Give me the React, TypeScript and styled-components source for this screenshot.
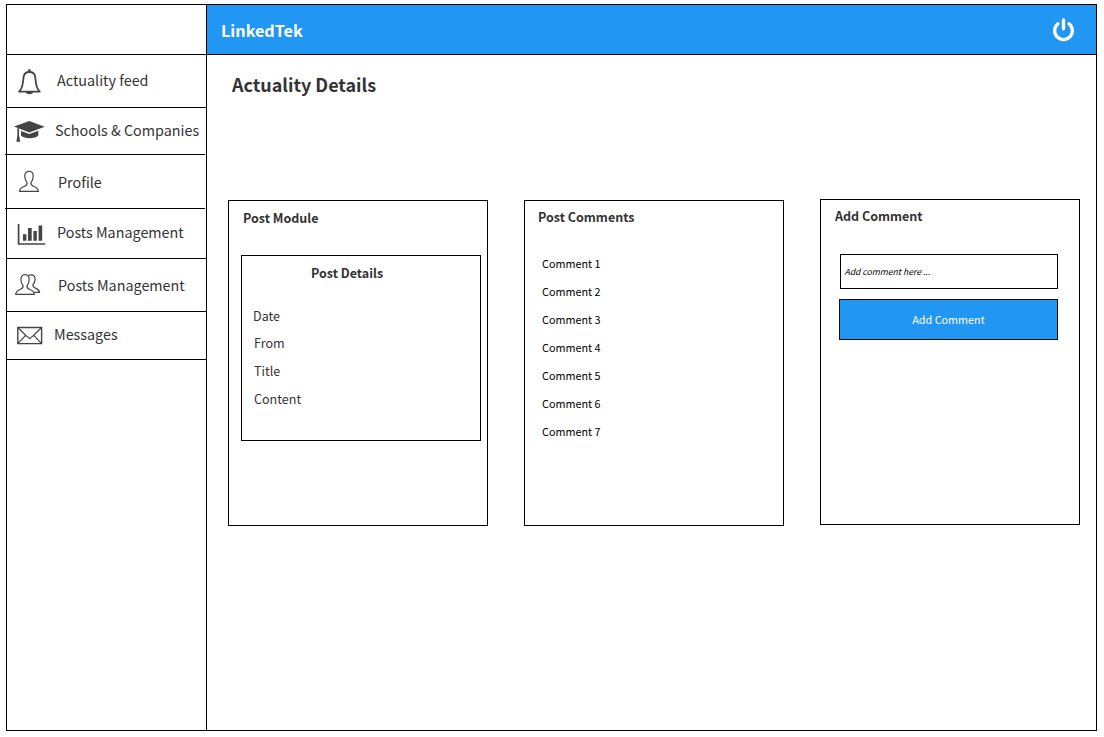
import React from "react";
import styled, { createGlobalStyle } from "styled-components";

const Global = createGlobalStyle`
  * { box-sizing: border-box; }
  body { margin: 0; background: #fff; color: #333; font-family: "Noto Sans CJK SC", "Noto Sans", sans-serif; }
  h1, h2, h3, p, ul { margin: 0; padding: 0; font-weight: inherit; }
  ul { list-style: none; }
`;

const Page = styled.div`
  width: 1104px;
  height: 737px;
  padding: 4px 0 0 6px;
  overflow: hidden;
`;

const Frame = styled.div`
  display: grid;
  grid-template-columns: 200px 1fr;
  width: 1091px;
  height: 727px;
  border: 1px solid #000;
`;

const Sidebar = styled.aside`
  border-right: 1px solid #000;
`;

const LogoSlot = styled.div`
  height: 50px;
  border-bottom: 1px solid #000;
`;

const NavItem = styled.li<{ $height: number; $shifted?: boolean }>`
  display: flex;
  align-items: flex-start;
  height: ${(p) => p.$height}px;
  margin: ${(p) => (p.$shifted ? "0 1px 0 -2px" : "0")};
  padding-left: ${(p) => (p.$shifted ? 7 : 5)}px;
  border-bottom: 1px solid #000;
`;

const NavIcon = styled.svg<{ $top: number }>`
  flex: none;
  width: 36px;
  height: 36px;
  margin-top: ${(p) => p.$top}px;
  fill: none;
  stroke: #444;
`;

const NavLabel = styled.span<{ $top: number; $gap: number }>`
  margin: ${(p) => p.$top}px 0 0 ${(p) => p.$gap}px;
  font-size: 14.35px;
  line-height: 24px;
  white-space: nowrap;
`;

const Main = styled.main`
  min-width: 0;
`;

const Header = styled.header`
  display: flex;
  justify-content: space-between;
  height: 50px;
  padding: 12px 20px 0 14px;
  background: #2196f3;
  border-bottom: 1px solid #000;
  color: #fff;
`;

const Brand = styled.div`
  font-size: 16.2px;
  font-weight: 700;
  line-height: 26px;
`;

const PowerIcon = styled.svg`
  width: 24px;
  height: 26px;
  fill: none;
  stroke: #fff;
  stroke-width: 3.3;
  stroke-linecap: round;
`;

const Title = styled.h1`
  padding: 15px 0 0 25px;
  font-size: 17.95px;
  font-weight: 700;
  line-height: 28px;
`;

const Cards = styled.div`
  display: flex;
  gap: 36px;
  padding: 101px 0 0 21px;
`;

const Card = styled.section<{ $raised?: boolean }>`
  width: 260px;
  height: 326px;
  margin-top: ${(p) => (p.$raised ? 0 : 1)}px;
  border: 1px solid #000;
`;

const CardTitle = styled.h2<{ $top: number; $left: number }>`
  padding: ${(p) => p.$top}px 0 0 ${(p) => p.$left}px;
  font-size: 12.5px;
  font-weight: 700;
  line-height: 20px;
`;

const Details = styled.div`
  width: 240px;
  height: 186px;
  margin: 27px 0 0 12px;
  border: 1px solid #000;
`;

const Field = styled.li<{ $gap: number; $left: number }>`
  margin-top: ${(p) => p.$gap}px;
  padding-left: ${(p) => p.$left}px;
  font-size: 12.55px;
  line-height: 20px;
`;

const Comments = styled.ul`
  padding: 22px 0 0 17px;
`;

const Comment = styled.li`
  color: #000;
  font-size: 10.8px;
  line-height: 28px;
`;

const CommentInput = styled.div`
  width: 218px;
  height: 35px;
  margin: 28px 0 0 19px;
  padding-left: 3.5px;
  border: 1px solid #000;
  color: #000;
  font-size: 8.65px;
  font-style: italic;
  line-height: 33px;
`;

const AddButton = styled.button`
  display: block;
  width: 219px;
  height: 41px;
  margin: 10px 0 0 18px;
  padding: 0;
  border: 1px solid #000;
  background: #2196f3;
  color: #fff;
  font: inherit;
  font-size: 10.8px;
  line-height: 39px;
`;

const icons = {
  bell: (
    <>
      <path d="M7 28.6C9.6 26.4 10.4 23.5 10.9 19.5L11.6 14.2C12 10.8 14.2 9 17.4 9C20.6 9 22.8 10.8 23.2 14.2L23.9 19.5C24.4 23.5 25.2 26.4 27.8 28.6Z" strokeWidth="1.8" strokeLinejoin="round" />
      <path d="M17.4 9V6.4" strokeWidth="2.6" />
      <path d="M13.6 29H21.2C20.6 32 14.2 32 13.6 29Z" fill="#444" stroke="none" />
    </>
  ),
  cap: (
    <g fill="#444" stroke="none">
      <path d="M2 13.6L17.3 8L32.7 13.8L17.3 19.5Z" />
      <path d="M9 18L17.3 21L26.3 17.8V22.5C23 26 12.5 26 9 22.5Z" />
      <path d="M5.4 14.8L7 15.4V22L8.2 28.7H4.4L5.4 22Z" />
    </g>
  ),
  user: (
    <path d="M17 8.3C13.9 8.3 12.7 10.4 12.8 13.4C12.9 16.3 13.7 17.9 15 19.4C15.4 21.4 14.7 22.3 12.7 23.2C9.7 24.5 7.8 25 7.6 28.3H26.4C26.2 25 24.3 24.5 21.3 23.2C19.3 22.3 18.6 21.4 19 19.4C20.3 17.9 21.1 16.3 21.2 13.4C21.3 10.4 20.1 8.3 17 8.3Z" strokeWidth="1.2" />
  ),
  bars: (
    <>
      <path d="M6.6 8V28H33.3" strokeWidth="1.7" />
      <path d="M11 18.3H14.4V24.8H11ZM16 12H19.7V24.8H16ZM21.4 15H24.8V24.8H21.4ZM26.6 9.6H30.2V24.8H26.6Z" fill="#444" stroke="none" />
    </>
  ),
  users: (
    <g strokeWidth="1.2">
      <path d="M13 7.7C9.9 7.7 8.8 9.8 8.9 12.7C9 15.6 9.7 17.1 11 18.5C11.4 20.5 10.6 21.4 8.6 22.3C5.7 23.5 3.9 24 3.7 27.3H22.3C22.1 24 20.3 23.5 17.4 22.3C15.4 21.4 14.7 20.5 15.1 18.5C16.4 17.1 17.1 15.6 17.2 12.7C17.3 9.8 16.1 7.7 13 7.7Z" />
      <path d="M16.4 8.4C17.2 8 18 7.8 19 7.8C22 7.8 23.3 9.6 23.1 12.4C22.9 15 22.2 16.3 21 17.5C20.6 19.3 21.3 20.2 23.2 21C25.8 22.1 27.3 22.6 27.5 25.4H22.2" />
    </g>
  ),
  mail: (
    <>
      <path d="M5.8 10.5H29.6V26.6H5.8Z" strokeWidth="1.4" />
      <path d="M5.8 10.5L14.4 19Q16 20 17.7 21.6Q19.4 20 21 19L29.6 10.5M5.8 26.6L13.6 18.3M29.6 26.6L21.8 18.3" strokeWidth="1.2" />
    </>
  ),
};

const navItems: {
  label: string;
  icon: keyof typeof icons;
  height: number;
  iconTop: number;
  labelTop: number;
  gap: number;
  shifted?: boolean;
}[] = [
  { label: "Actuality feed", icon: "bell", height: 53, iconTop: 8, labelTop: 13, gap: 9 },
  { label: "Schools & Companies", icon: "cap", height: 47, iconTop: 5, labelTop: 10, gap: 7, shifted: true },
  { label: "Profile", icon: "user", height: 54, iconTop: 8, labelTop: 15, gap: 10, shifted: true },
  { label: "Posts Management", icon: "bars", height: 50, iconTop: 7, labelTop: 11, gap: 9 },
  { label: "Posts Management", icon: "users", height: 53, iconTop: 8, labelTop: 14, gap: 10 },
  { label: "Messages", icon: "mail", height: 48, iconTop: 5, labelTop: 10, gap: 6 },
];

const fields = [
  { label: "Date", gap: 23, left: 11 },
  { label: "From", gap: 7, left: 12 },
  { label: "Title", gap: 8, left: 12 },
  { label: "Content", gap: 8, left: 12 },
];

export default function App() {
  return (
    <Page>
      <Global />
      <Frame>
        <Sidebar>
          <LogoSlot />
          <ul>
            {navItems.map((item, i) => (
              <NavItem key={i} $height={item.height} $shifted={item.shifted}>
                <NavIcon viewBox="0 0 36 36" $top={item.iconTop}>
                  {icons[item.icon]}
                </NavIcon>
                <NavLabel $top={item.labelTop} $gap={item.gap}>
                  {item.label}
                </NavLabel>
              </NavItem>
            ))}
          </ul>
        </Sidebar>
        <Main>
          <Header>
            <Brand>LinkedTek</Brand>
            <PowerIcon viewBox="0 0 24 26">
              <path d="M6 6.7A8.9 8.9 0 1 0 17 6.7M11.5 3V11.8" />
            </PowerIcon>
          </Header>
          <Title>Actuality Details</Title>
          <Cards>
            <Card>
              <CardTitle $top={7} $left={14}>Post Module</CardTitle>
              <Details>
                <CardTitle $top={7} $left={69}>Post Details</CardTitle>
                <ul>
                  {fields.map((f) => (
                    <Field key={f.label} $gap={f.gap} $left={f.left}>{f.label}</Field>
                  ))}
                </ul>
              </Details>
            </Card>
            <Card>
              <CardTitle $top={6} $left={13}>Post Comments</CardTitle>
              <Comments>
                {[1, 2, 3, 4, 5, 6, 7].map((n) => (
                  <Comment key={n}>Comment {n}</Comment>
                ))}
              </Comments>
            </Card>
            <Card $raised>
              <CardTitle $top={6} $left={14}>Add Comment</CardTitle>
              <CommentInput>Add comment here ...</CommentInput>
              <AddButton>Add Comment</AddButton>
            </Card>
          </Cards>
        </Main>
      </Frame>
    </Page>
  );
}
